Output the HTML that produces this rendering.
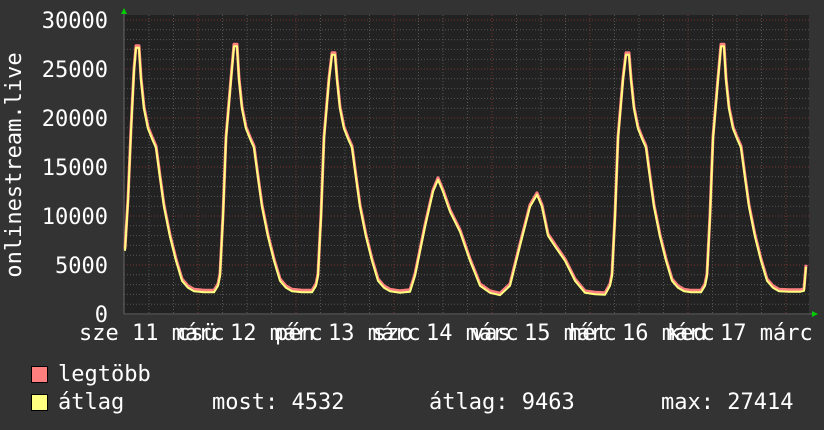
<!DOCTYPE html><html><head><style>body{margin:0;background:#333}svg{display:block}text{font-family:"DejaVu Sans Mono","Liberation Mono",monospace;font-size:22px;fill:#fff}</style></head><body>
<svg width="824" height="430" viewBox="0 0 824 430">
<rect width="824" height="430" fill="#333"/>
<rect x="124" y="15" width="685" height="300" fill="#222"/>
<g stroke="#555" stroke-width="1" stroke-dasharray="1,2">
<path d="M124 304.2H809M124 294.4H809M124 284.6H809M124 274.8H809M124 255.2H809M124 245.4H809M124 235.6H809M124 225.8H809M124 206.2H809M124 196.4H809M124 186.6H809M124 176.8H809M124 157.2H809M124 147.4H809M124 137.6H809M124 127.8H809M124 108.2H809M124 98.4H809M124 88.6H809M124 78.8H809M124 59.2H809M124 49.4H809M124 39.6H809M124 29.8H809"/>
<path d="M149 15V315M173.5 15V315M222.5 15V315M247 15V315M271.5 15V315M320.5 15V315M345 15V315M369.5 15V315M418.5 15V315M443 15V315M467.5 15V315M516.5 15V315M541 15V315M565.5 15V315M614.5 15V315M639 15V315M663.5 15V315M712.5 15V315M737 15V315M761.5 15V315"/>
</g>
<g stroke="#7a3434" stroke-width="1" stroke-dasharray="1,2">
<path d="M124 20H809M124 69H809M124 118H809M124 167H809M124 216H809M124 265H809"/>
<path d="M198 15V315M296 15V315M394 15V315M492 15V315M590 15V315M688 15V315M786 15V315"/>
</g>
<path d="M124 314H812M124 314V13" stroke="#666" stroke-width="1"/>
<path d="M121 14L124 8L127 14Z M812 311L818 314L812 317Z" fill="#0c0"/>
<g fill="none" stroke-linejoin="round">
<polyline stroke="#ff7f7f" stroke-width="3" transform="translate(0,-1.2)" points="125,250 128,200 131,130 134,70 136,47 139,47 141,78.8 144,108 148,128 152,138 156,147 160,177 164,206 170,236 176,260 182,280 188,287 194,290.5 204,291.5 214,291.5 218,285 220,275 223,216 226,138 231,79 234,45.5 237,45.5 239,79 242,108 246,128 250,138 254,147 258,177 262,206 268,236 274,260 280,280 286,287 292,290.5 302,291.5 312,291.5 316,285 318,275 321,216 324,138 329,79 332,54 335,54 337,79 340,108 344,128 348,138 352,147 356,177 360,206 366,236 372,260 378,280 384,287 390,290.5 400,292 410,291 415,275 425,226 433,191 438,179 443,191 450,211 460,231 470,260 480,285 490,292 500,294.4 510,285 520,245 530,206 537,194 542,206 548,235 556,247 565,260 575,280 585,292 595,293.4 605,294 610,285 612,275 615,216 618,138 623,79 626,54 629,54 631,79 634,108 638,128 642,138 646,147 650,177 654,206 660,236 666,260 672,280 678,287 684,290.5 691,291.5 701,291.5 705,285 707,275 710,216 713,138 718,79 721,45.5 724,45.5 726,79 729,108 733,128 737,138 741,147 745,177 749,206 755,236 761,260 767,280 773,287 779,290.5 789,291 800,291 804,290 806,266"/>
<polyline stroke="#ffff80" stroke-width="2" transform="translate(0,0.8)" points="125,250 128,200 131,130 134,70 136,47 139,47 141,78.8 144,108 148,128 152,138 156,147 160,177 164,206 170,236 176,260 182,280 188,287 194,290.5 204,291.5 214,291.5 218,285 220,275 223,216 226,138 231,79 234,45.5 237,45.5 239,79 242,108 246,128 250,138 254,147 258,177 262,206 268,236 274,260 280,280 286,287 292,290.5 302,291.5 312,291.5 316,285 318,275 321,216 324,138 329,79 332,54 335,54 337,79 340,108 344,128 348,138 352,147 356,177 360,206 366,236 372,260 378,280 384,287 390,290.5 400,292 410,291 415,275 425,226 433,191 438,179 443,191 450,211 460,231 470,260 480,285 490,292 500,294.4 510,285 520,245 530,206 537,194 542,206 548,235 556,247 565,260 575,280 585,292 595,293.4 605,294 610,285 612,275 615,216 618,138 623,79 626,54 629,54 631,79 634,108 638,128 642,138 646,147 650,177 654,206 660,236 666,260 672,280 678,287 684,290.5 691,291.5 701,291.5 705,285 707,275 710,216 713,138 718,79 721,45.5 724,45.5 726,79 729,108 733,128 737,138 741,147 745,177 749,206 755,236 761,260 767,280 773,287 779,290.5 789,291 800,291 804,290 806,266"/>
</g>
<g text-anchor="end">
<text x="108" y="28">30000</text><text x="108" y="77">25000</text><text x="108" y="126">20000</text><text x="108" y="175">15000</text><text x="108" y="224">10000</text><text x="108" y="273">5000</text><text x="108" y="322">0</text>
</g>
<text transform="translate(21,165) rotate(-90)" text-anchor="middle">onlinestream.live</text>
<g>
<text x="79" y="340">sze 11 márc</text><text x="177" y="340">csü 12 márc</text><text x="275" y="340">pén 13 márc</text><text x="373" y="340">szo 14 márc</text><text x="471" y="340">vas 15 márc</text><text x="569" y="340">hét 16 márc</text><text x="667" y="340">ked 17 márc</text>
</g>
<rect x="31.5" y="366.5" width="16" height="16" fill="#ff7f7f" stroke="#000"/>
<rect x="31.5" y="394.5" width="16" height="16" fill="#ffff80" stroke="#000"/>
<text x="58" y="381">legtöbb</text>
<text x="58" y="409">átlag</text>
<text x="212" y="409">most: 4532</text>
<text x="429" y="409">átlag: 9463</text>
<text x="661" y="409">max: 27414</text>
</svg></body></html>
